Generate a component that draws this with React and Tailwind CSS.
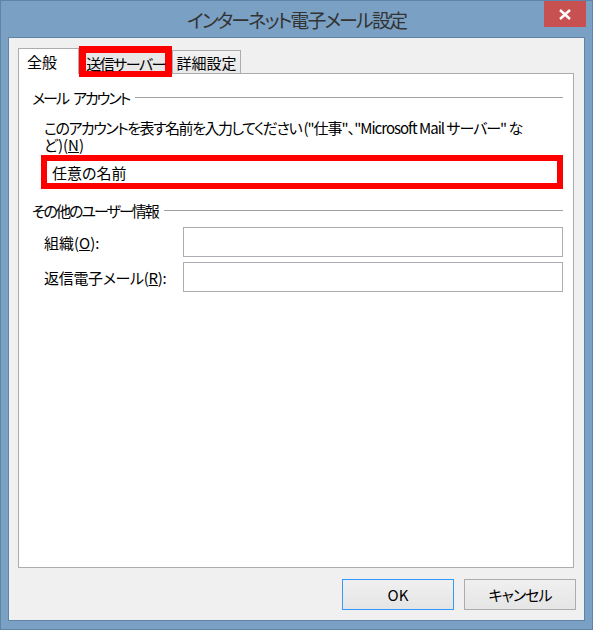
export default function App() {
  return (
    <div className="w-[593px] h-[630px] bg-[#7aa1c4] border border-[#5f84a8] flex flex-col font-['Noto_Sans_CJK_JP','Noto_Sans',sans-serif] [font-feature-settings:'palt'] text-[15px] text-black leading-none">
      <div className="h-[36px] grid grid-cols-[1fr_auto_1fr] items-start shrink-0">
        <div />
        <div className="h-[36px] flex items-center text-[19px] text-[#333333] tracking-[-1.9px] whitespace-nowrap">インターネット電子メール設定</div>
        <div className="flex justify-end">
          <div className="w-[42px] h-[26px] mr-[6px] bg-[#c75050] flex items-center justify-center">
            <svg width="12" height="11" viewBox="0 0 12 11">
              <path d="M1 1 L11 10 M11 1 L1 10" stroke="white" strokeWidth="2.4" />
            </svg>
          </div>
        </div>
      </div>
      <div className="mx-[7px] h-[584px] shrink-0 border border-[#5f84a8] bg-[#f0f0f0] flex flex-col">
        <div className="mt-[8px] ml-[9px] h-[27px] flex items-end">
          <div className="relative z-[1] w-[61px] h-[26px] -mb-px bg-white border-l border-t border-r border-[#acacac] flex items-center pl-[8px]">
            全般
          </div>
          <div className="relative z-[2] w-[93px] h-[31px] -mb-[4px] border-[7px] border-b-[6px] border-[#ff0000] bg-[#e8e8e8] flex items-center justify-center whitespace-nowrap tracking-[-1.5px] pt-[2px]">
            送信サーバー
          </div>
          <div className="w-[69px] h-[23px] border-l border-t border-r border-[#acacac] bg-linear-to-b from-[#f2f2f2] to-[#e8e8e8] flex items-center justify-center whitespace-nowrap">
            詳細設定
          </div>
        </div>
        <div className="ml-[9px] w-[556px] h-[495px] border border-[#acacac] bg-white pt-[13px] pl-[13px] pr-[10px] flex flex-col">
          <div className="h-[20px] flex items-center">
            <span className="tracking-[-2px] whitespace-nowrap">メール</span>
            <span className="tracking-[-2px] whitespace-nowrap ml-[5px]">アカウント</span>
            <div className="flex-1 h-px bg-[#a0a0a0] ml-[6px]" />
          </div>
          <div className="mt-[12px] pl-[12px] leading-[17px] whitespace-nowrap">
            <span className="tracking-[-1.5px]">このアカウントを表す名前を入力してください</span>
            <span className="tracking-[-1px]"> ("仕事"、"Microsoft Mail サーバー" な</span>
            <br />
            ど)(<span className="underline">N</span>)
          </div>
          <div className="mt-[2px] ml-[9px] h-[34px] border-[6px] border-[#ff0000] bg-white flex items-center pl-[5px]">
            任意の名前
          </div>
          <div className="mt-[11px] h-[20px] flex items-center">
            <span className="tracking-[-2px] whitespace-nowrap">その他のユーザー情報</span>
            <div className="flex-1 h-px bg-[#a0a0a0] ml-[6px]" />
          </div>
          <div className="mt-[7px] flex items-center">
            <div className="w-[151px] shrink-0 pl-[12px] whitespace-nowrap">
              組織(<span className="underline">O</span>):
            </div>
            <div className="flex-1 h-[30px] border border-[#abadb3] bg-white" />
          </div>
          <div className="mt-[5px] flex items-center">
            <div className="w-[151px] shrink-0 pl-[12px] whitespace-nowrap tracking-[-0.3px]">
              返信電子メール(<span className="underline">R</span>):
            </div>
            <div className="flex-1 h-[30px] border border-[#abadb3] bg-white" />
          </div>
        </div>
        <div className="mt-[11px] pr-[8px] flex justify-end gap-[10px]">
          <div className="w-[112px] h-[31px] border border-[#3399ff] bg-linear-to-b from-[#f0f0f0] to-[#e5e5e5] flex items-center justify-center">
            OK
          </div>
          <div className="w-[112px] h-[31px] border border-[#acacac] bg-linear-to-b from-[#f0f0f0] to-[#e5e5e5] flex items-center justify-center tracking-[-1px]">
            キャンセル
          </div>
        </div>
      </div>
    </div>
  );
}
